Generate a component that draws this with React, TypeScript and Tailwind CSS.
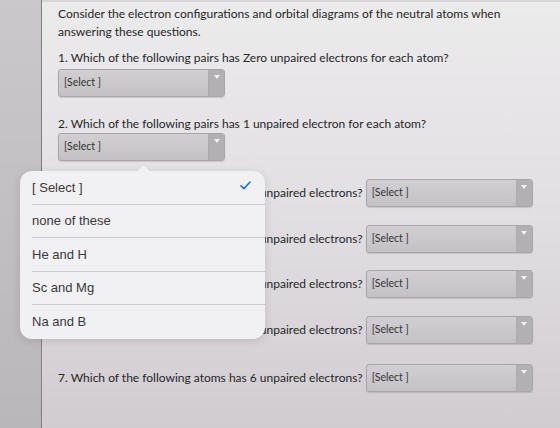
import { Fragment } from 'react'

const LATO = "font-['Lato','Liberation_Sans',sans-serif]"
const SYS = "font-['Liberation_Sans','Roboto',sans-serif]"

const OPTIONS = ['[ Select ]', 'none of these', 'He and H', 'Sc and Mg', 'Na and B']

const ROWS = [
  '3. Which of the following atoms has 3 unpaired electrons?',
  '4. Which of the following atoms has 2 unpaired electrons?',
  '5. Which of the following atoms has 4 unpaired electrons?',
  '6. Which of the following atoms has 5 unpaired electrons?',
]

function SelectBox() {
  return (
    <div className="flex h-[28px] w-[167px] shrink-0 overflow-hidden rounded-[3px] border border-[#a8a6a8] bg-linear-to-b from-[#d1cfd1] to-[#c3c1c3] shadow-[0_1px_1px_rgba(0,0,0,0.12)]">
      <div className="flex flex-1 items-center pl-[5px] text-[10.5px] text-[#333]">[Select ]</div>
      <div className="flex w-[16px] justify-center border-l border-[#adabad] bg-[#b2b0b2] pt-[5px]">
        <div className="h-0 w-0 border-x-[3px] border-t-[4px] border-x-transparent border-t-[#f2f2f2]" />
      </div>
    </div>
  )
}

function Question({ text }: { text: string }) {
  return (
    <div className="flex items-center">
      <span className="mr-[3px] whitespace-nowrap text-[12px] leading-[18px] text-[#262626]">{text}</span>
      <SelectBox />
    </div>
  )
}

export default function App() {
  return (
    <div className={`relative flex h-[428px] w-[560px] overflow-hidden ${LATO}`}>
      <div className="w-[42px] shrink-0 border-r border-[#7f7d7f] bg-linear-to-b from-[#cac8ca] to-[#bab7ba]" />

      <div className="flex-1 border-t-2 border-[#d6d4d6] bg-linear-to-b from-[#ecebec] via-[#e2dfe2] to-[#d0ccd0] pl-[16px] pt-[3px]">
        <p className="text-[12px] leading-[18px] text-[#262626]">
          Consider the electron configurations and orbital diagrams of the neutral atoms when
          <br />
          answering these questions.
        </p>

        <p className="mt-[8px] text-[12px] leading-[18px] text-[#262626]">
          1. Which of the following pairs has Zero unpaired electrons for each atom?
        </p>
        <div className="mt-[2px]">
          <SelectBox />
        </div>

        <p className="mt-[18px] text-[12px] leading-[18px] text-[#262626]">
          2. Which of the following pairs has 1 unpaired electron for each atom?
        </p>
        <div>
          <SelectBox />
        </div>

        <div className="mt-[18px] flex flex-col gap-[17.5px]">
          {ROWS.map(r => (
            <Fragment key={r}>
              <Question text={r} />
            </Fragment>
          ))}
        </div>
        <div className="mt-[20px]">
          <Question text="7. Which of the following atoms has 6 unpaired electrons?" />
        </div>
      </div>

      {/* native picker popover */}
      <div className={`absolute left-[20px] top-[171px] w-[245px] rounded-[12px] bg-[#f1f0f2] shadow-[0_2px_10px_rgba(0,0,0,0.12)] ${SYS}`}>
        <div className="absolute -top-[4px] left-[119px] h-[9px] w-[9px] rotate-45 bg-[#f1f0f2]" />
        {OPTIONS.map((o, i) => (
          <div key={o} className="relative pl-[12px]">
            <div
              className={`flex h-[33.5px] items-center justify-between pr-[14px] text-[13px] text-[#3a3a3a] ${i < OPTIONS.length - 1 ? 'border-b border-[#cac9cc]' : ''}`}
            >
              <span>{o}</span>
              {i === 0 && (
                <svg width="11" height="9" viewBox="0 0 11 9" className="-mt-[3px]">
                  <polyline points="1,4.8 4,7.6 10,1" fill="none" stroke="#2a6fd4" strokeWidth="1.6" strokeLinecap="round" strokeLinejoin="round" />
                </svg>
              )}
            </div>
          </div>
        ))}
      </div>
    </div>
  )
}
